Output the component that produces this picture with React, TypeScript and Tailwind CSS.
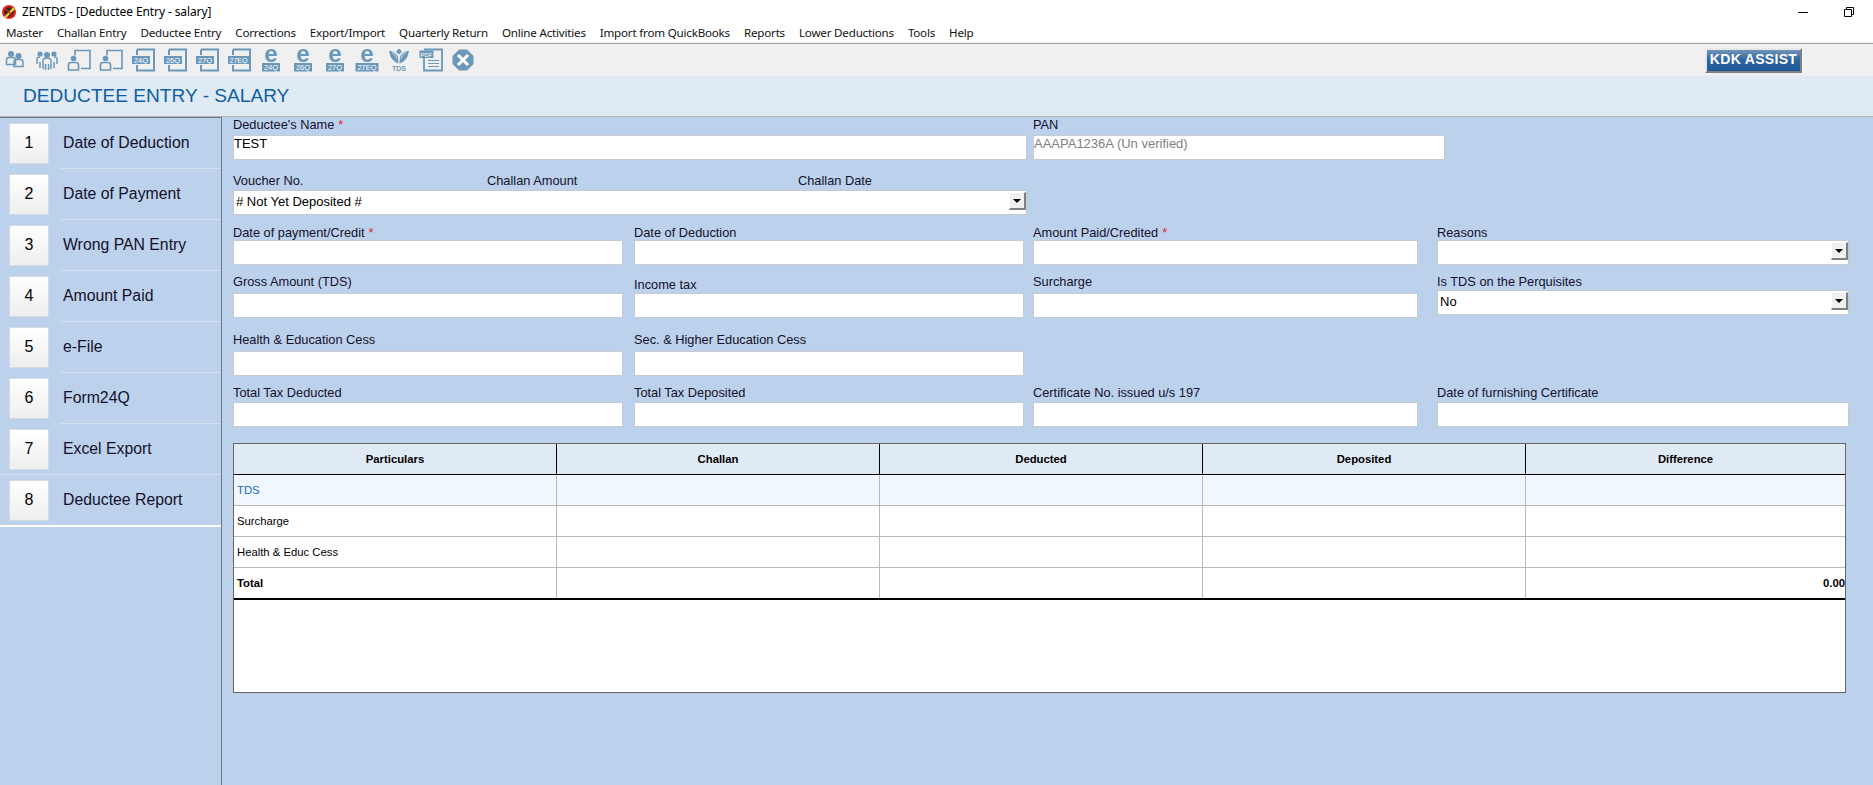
import type { ReactNode } from "react";

const iconColor = "#6a98ba";

const menuItems = [
  "Master",
  "Challan Entry",
  "Deductee Entry",
  "Corrections",
  "Export/Import",
  "Quarterly Return",
  "Online Activities",
  "Import from QuickBooks",
  "Reports",
  "Lower Deductions",
  "Tools",
  "Help",
];

const steps = [
  "Date of Deduction",
  "Date of Payment",
  "Wrong PAN Entry",
  "Amount Paid",
  "e-File",
  "Form24Q",
  "Excel Export",
  "Deductee Report",
];

const tableRows = [
  { name: "Surcharge" },
  { name: "Health & Educ Cess" },
];

const Person = ({ x, y, s = 1 }: { x: number; y: number; s?: number }) => (
  <g transform={`translate(${x} ${y}) scale(${s})`}>
    <circle cx="0" cy="0" r="3" fill={iconColor} />
    <path d="M-4.5 10.5v-4.5q0-2.5 2.5-2.5h4q2.5 0 2.5 2.5v4.5z" fill="none" stroke={iconColor} strokeWidth="1.5" />
  </g>
);

const PairIcon = () => (
  <svg width="24" height="24" viewBox="0 0 24 24">
    <Person x={8} y={6} />
    <Person x={15.5} y={8} />
  </svg>
);

const GroupIcon = () => (
  <svg width="24" height="24" viewBox="0 0 24 24">
    <circle cx="5" cy="6" r="2.6" fill={iconColor} />
    <circle cx="19" cy="6" r="2.6" fill={iconColor} />
    <circle cx="12" cy="7" r="3" fill={iconColor} />
    <path d="M2 16v-5q0-2 3-2M22 16v-5q0-2-3-2M8 21V13q0-3 4-3t4 3v8M10.500 22v-6M13.500 22v-6M5 20v-6M19 20v-6" fill="none" stroke={iconColor} strokeWidth="1.5" />
  </svg>
);

const DocPersonIcon = () => (
  <svg width="24" height="24" viewBox="0 0 24 24">
    <path d="M8 7.500V2.500H23V20.500H14" fill="none" stroke={iconColor} strokeWidth="1.6" />
    <circle cx="6.500" cy="10.500" r="2.800" fill={iconColor} />
    <path d="M1.500 22v-5q0-2.500 2.500-2.500h5q2.500 0 2.500 2.500v5z" fill="none" stroke={iconColor} strokeWidth="1.7" />
  </svg>
);

const DocTagIcon = ({ label, wide }: { label: string; wide?: boolean }) => (
  <svg width="24" height="24" viewBox="0 0 24 24">
    <path d="M6 1.500H23V22.500H6V17M6 1.500V7" fill="none" stroke={iconColor} strokeWidth="2" />
    <rect x="1" y="8" width={wide ? 21 : 18} height="8" fill={iconColor} />
    <text x={wide ? 11.500 : 10} y="14.700" textAnchor="middle" fontSize={wide ? 7 : 7.500} fill="#fff" fontFamily="Liberation Sans, sans-serif">
      {label}
    </text>
  </svg>
);

const EIcon = ({ label, wide }: { label: string; wide?: boolean }) => (
  <svg width="24" height="24" viewBox="0 0 24 24" className="overflow-visible">
    <text x="12" y="13.800" textAnchor="middle" fontSize="24" fontWeight="700" fill={iconColor} fontFamily="Liberation Sans, sans-serif">
      e
    </text>
    <rect x={wide ? 0.500 : 3} y="15" width={wide ? 23 : 18} height="8.500" fill={iconColor} />
    <text x="12" y="22.200" textAnchor="middle" fontSize="7.500" fill="#fff" fontFamily="Liberation Sans, sans-serif">
      {label}
    </text>
  </svg>
);

const TdsIcon = () => (
  <svg width="24" height="24" viewBox="0 0 24 24">
    <path d="M12 .5 15 3.500 12 6.500 9 3.500zM2 3q6 0 9 5.500l.5 7q-8-2.500-9.500-12.500zM22 3q-6 0-9 5.500l-.5 7q8-2.500 9.500-12.500z" fill={iconColor} />
    <path d="M5 4.500q4 1 5 6M19 4.500q-4 1-5 6" stroke="#f0f0f0" strokeWidth="0.8" fill="none" />
    <text x="12" y="23" textAnchor="middle" fontSize="7" fontWeight="700" fill={iconColor} fontFamily="Liberation Sans, sans-serif">
      TDS
    </text>
  </svg>
);

const PdfIcon = () => (
  <svg width="24" height="24" viewBox="0 0 24 24">
    <path d="M5 1.500H23V22.500H5V10" fill="none" stroke={iconColor} strokeWidth="1.800" />
    <path d="M9 12.500H20M9 15.500H20M9 18.500H20" stroke={iconColor} strokeWidth="1.100" />
    <rect x="0.500" y="2.500" width="14" height="7.500" fill={iconColor} />
    <text x="7.500" y="8.600" textAnchor="middle" fontSize="6" fill="#fff" fontFamily="Liberation Sans, sans-serif">
      PDF
    </text>
  </svg>
);

const CloseIcon = () => (
  <svg width="24" height="24" viewBox="0 0 24 24">
    <path d="M8 1.500H16L22.500 8V16L16 22.500H8L1.500 16V8z" fill={iconColor} />
    <path d="M8 8 16 16M16 8 8 16" stroke="#fff" strokeWidth="3" strokeLinecap="square" />
  </svg>
);

const AppLogo = () => (
  <svg width="16" height="16" viewBox="0 0 16 16" className="ml-[1px]">
    <circle cx="8" cy="8" r="7" fill="#e0241c" />
    <circle cx="8" cy="8" r="4.800" fill="#2a2a1c" />
    <path d="M3 13 12 3.500 14 5 5 14z" fill="#e6d23a" />
    <path d="M3 3.500 13 13" stroke="#d8201a" strokeWidth="1.600" />
  </svg>
);

const FieldLabel = ({ text, required, className = "mb-0" }: { text: string; required?: boolean; className?: string }) => (
  <div className={`h-[16px] whitespace-nowrap text-[12.8px] leading-[16px] text-[#14102a] ${className}`}>
    {text}
    {required && <span className="ml-[4px] text-[#e8222c]">*</span>}
  </div>
);

const TextBox = ({ value, muted }: { value?: string; muted?: boolean }) => (
  <div
    className={`h-[25px] w-full border border-[#c6cbd2] bg-white text-[13px] leading-[16px] ${
      muted ? "text-[#808080]" : "text-black"
    }`}
  >
    {value}
  </div>
);

const ComboBox = ({ value }: { value?: string }) => (
  <div className="flex h-[25px] w-full items-start justify-between border border-[#c6cbd2] bg-white pl-[2px] text-[13px] leading-[22px] text-black">
    <span>{value}</span>
    <span className="mt-[1px] flex h-[18px] w-[17px] items-center justify-center border-t border-l border-t-white border-l-white border-r-2 border-b-2 border-r-[#808080] border-b-[#808080] bg-[#f0f0f0]">
      <span className="h-0 w-0 border-x-[4px] border-t-[4px] border-x-transparent border-t-black" />
    </span>
  </div>
);

const Field = ({
  label,
  required,
  width,
  labelClass,
  children,
}: {
  label: string;
  required?: boolean;
  width: string;
  labelClass?: string;
  children?: ReactNode;
}) => (
  <div className={`shrink-0 ${width}`}>
    <FieldLabel text={label} required={required} className={labelClass} />
    {children ?? <TextBox />}
  </div>
);

const App = () => {
  return (
    <div className="flex h-[785px] w-[1873px] flex-col overflow-hidden bg-[#bcd2ec] font-['Liberation_Sans',Arial,sans-serif]">
      {/* window title */}
      <div className="flex h-[24px] shrink-0 items-center bg-white font-['Noto_Sans',sans-serif] text-[12px] text-black">
        <AppLogo />
        <span className="ml-[5px] tracking-[-0.1px]">ZENTDS - [Deductee Entry - salary]</span>
        <div className="ml-auto flex items-center">
          <span className="h-px w-[10px] bg-black" />
          <svg width="10" height="10" viewBox="0 0 10 10" className="mr-[19px] ml-[36px]">
            <path d="M.5 2.500h7v7h-7zM2.500 2.500V.5h7v7H7.500" fill="none" stroke="#000" />
          </svg>
        </div>
      </div>

      {/* menu */}
      <div className="flex h-[18px] shrink-0 items-center bg-white pl-[6px] font-['Noto_Sans',sans-serif] text-[11.6px] tracking-[-0.2px] text-[#111]">
        {menuItems.map((item) => (
          <span key={item} className="mr-[14px] whitespace-nowrap">
            {item}
          </span>
        ))}
      </div>
      <div className="h-px shrink-0 bg-[#f0f0f0]" />

      {/* toolbar */}
      <div className="flex h-[33px] shrink-0 items-center border-t border-[#a0a0a0] bg-[#f0f0f0]">
        <div className="-ml-px flex">
          {[
            <PairIcon />,
            <GroupIcon />,
            <DocPersonIcon />,
            <DocPersonIcon />,
            <DocTagIcon label="24Q" />,
            <DocTagIcon label="26Q" />,
            <DocTagIcon label="27Q" />,
            <DocTagIcon label="27EQ" wide />,
            <EIcon label="24Q" />,
            <EIcon label="26Q" />,
            <EIcon label="27Q" />,
            <EIcon label="27EQ" wide />,
            <TdsIcon />,
            <PdfIcon />,
            <CloseIcon />,
          ].map((icon, i) => (
            <span key={i} className="flex w-[32px] justify-center">
              {icon}
            </span>
          ))}
        </div>
        <div className="mr-[71px] ml-auto flex h-[25px] w-[97px] items-center justify-center border-t-2 border-l-2 border-t-[#e8e8e8] border-l-[#e8e8e8] border-r-2 border-b-2 border-r-[#808080] border-b-[#808080] bg-gradient-to-b from-[#6f94ba] via-[#2b639f] to-[#1f5a9a] pb-[2px] text-[14px] font-bold tracking-[0.3px] text-white">
          KDK ASSIST
        </div>
      </div>

      {/* page heading */}
      <div className="flex h-[41px] shrink-0 items-center border-b border-[#b4b4b4] bg-[#e0eaf4] pl-[23px] text-[19.1px] text-[#0d5ea6]">
        DEDUCTEE ENTRY - SALARY
      </div>

      <div className="flex min-h-0 flex-1">
        {/* step list */}
        <div className="w-[222px] shrink-0 border-t border-r border-[#6b7686]">
          {steps.map((step, i) => (
            <div key={step}>
              <div className="flex h-[50px] items-center pl-[9px]">
                <div className="flex h-[41px] w-[40px] items-center justify-center rounded-[1px] border border-[#d5dbe2] bg-gradient-to-b from-white to-[#eeeeee] text-[16px] text-black">
                  {i + 1}
                </div>
                <span className="ml-[14px] text-[15.8px] text-[#14102a]">{step}</span>
              </div>
              <div
                className={
                  i === 7
                    ? "h-[2px] bg-white"
                    : i === 6
                      ? "h-px bg-[#d5e0ee]"
                      : "ml-[60px] h-px bg-[#d5e0ee]"
                }
              />
            </div>
          ))}
        </div>

        {/* entry form */}
        <div className="min-w-0 flex-1 pl-[11px]">
          <div className="flex">
            <Field label="Deductee's Name" required width="w-[794px]" labelClass="mb-[2px]">
              <TextBox value="TEST" />
            </Field>
            <Field label="PAN" width="ml-[6px] w-[412px]" labelClass="mb-[2px]">
              <TextBox value="AAAPA1236A (Un verified)" muted />
            </Field>
          </div>

          <div className="mt-[13px] w-[794px]">
            <div className="mb-[1px] flex">
              <FieldLabel text="Voucher No." className="w-[254px]" />
              <FieldLabel text="Challan Amount" className="w-[311px]" />
              <FieldLabel text="Challan Date" />
            </div>
            <ComboBox value="# Not Yet Deposited #" />
          </div>

          <div className="mt-[9px] flex">
            <Field label="Date of payment/Credit" required width="w-[390px]" labelClass="pt-[1px]" />
            <Field label="Date of Deduction" width="ml-[11px] w-[390px]" labelClass="pt-[1px]" />
            <Field label="Amount Paid/Credited" required width="ml-[9px] w-[385px]" labelClass="pt-[1px]" />
            <Field label="Reasons" width="ml-[19px] w-[412px]" labelClass="pt-[1px]">
              <ComboBox />
            </Field>
          </div>

          <div className="mt-[9px] flex items-start">
            <Field label="Gross Amount (TDS)" width="w-[390px]" labelClass="mb-[3px]" />
            <Field label="Income tax" width="mt-[3px] ml-[11px] w-[390px]" />
            <Field label="Surcharge" width="ml-[9px] w-[385px]" labelClass="mb-[3px]" />
            <Field label="Is TDS on the Perquisites" width="ml-[19px] w-[412px]">
              <ComboBox value="No" />
            </Field>
          </div>

          <div className="mt-[13px] flex">
            <Field label="Health & Education Cess" width="w-[390px]" labelClass="mb-[4px] pt-[1px]" />
            <Field label="Sec. & Higher Education Cess" width="ml-[11px] w-[390px]" labelClass="mb-[4px] pt-[1px]" />
          </div>

          <div className="mt-[9px] flex">
            <Field label="Total Tax Deducted" width="w-[390px]" labelClass="mb-[1px]" />
            <Field label="Total Tax Deposited" width="ml-[11px] w-[390px]" labelClass="mb-[1px]" />
            <Field label="Certificate No. issued u/s 197" width="ml-[9px] w-[385px]" labelClass="mb-[1px]" />
            <Field label="Date of furnishing Certificate" width="ml-[19px] w-[412px]" labelClass="mb-[1px]" />
          </div>

          {/* tax summary */}
          <div className="mt-[16px] h-[250px] w-[1613px] border border-[#666666] bg-white text-[11.3px] text-black">
            <div className="grid h-[31px] grid-cols-[323px_323px_323px_323px_1fr] items-center border-b border-black bg-[#e0eaf4] text-center font-bold">
              <div className="flex h-full items-center justify-center border-r border-black">Particulars</div>
              <div className="flex h-full items-center justify-center border-r border-black">Challan</div>
              <div className="flex h-full items-center justify-center border-r border-black">Deducted</div>
              <div className="flex h-full items-center justify-center border-r border-black">Deposited</div>
              <div>Difference</div>
            </div>
            <div className="grid h-[31px] grid-cols-[323px_323px_323px_323px_1fr] border-b border-[#b8b8b8] bg-[#f0f7fe]">
              <div className="flex items-center border-r border-[#b8b8b8] pl-[3px] text-[#2468c0]">TDS</div>
              <div className="border-r border-[#b8b8b8]" />
              <div className="border-r border-[#b8b8b8]" />
              <div className="border-r border-[#b8b8b8]" />
              <div />
            </div>
            {tableRows.map((row) => (
              <div key={row.name} className="grid h-[31px] grid-cols-[323px_323px_323px_323px_1fr] border-b border-[#b8b8b8]">
                <div className="flex items-center border-r border-[#b8b8b8] pl-[3px]">{row.name}</div>
                <div className="border-r border-[#b8b8b8]" />
                <div className="border-r border-[#b8b8b8]" />
                <div className="border-r border-[#b8b8b8]" />
                <div />
              </div>
            ))}
            <div className="grid h-[32px] grid-cols-[323px_323px_323px_323px_1fr] border-b-2 border-black font-bold">
              <div className="flex items-center border-r border-[#b8b8b8] pl-[3px]">Total</div>
              <div className="border-r border-[#b8b8b8]" />
              <div className="border-r border-[#b8b8b8]" />
              <div className="border-r border-[#b8b8b8]" />
              <div className="flex items-center justify-end">0.00</div>
            </div>
          </div>
        </div>
      </div>
    </div>
  );
};

export default App;
